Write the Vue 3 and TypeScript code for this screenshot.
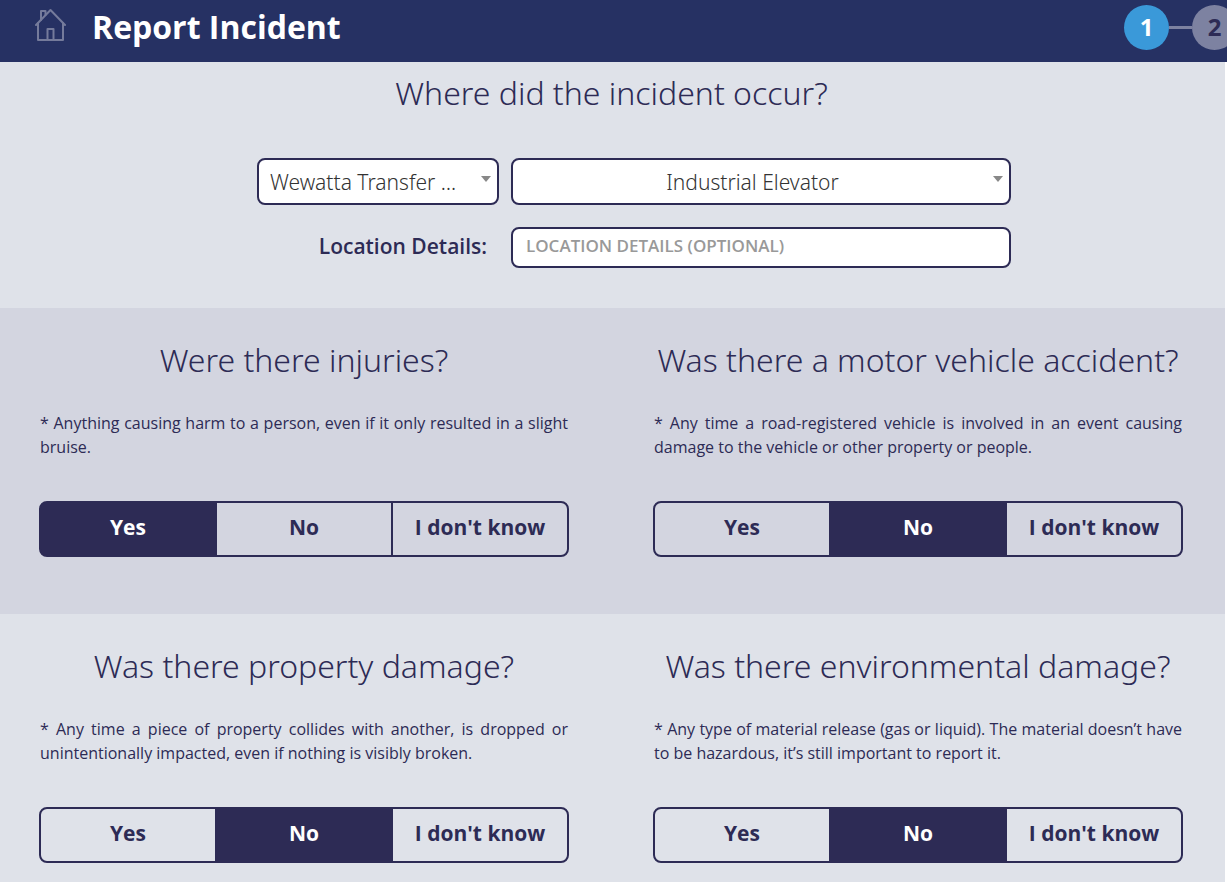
<script setup lang="ts">
import { ref } from 'vue'

interface Question {
  id: string
  title: string
  note: string
  answer: string
}

const answers: string[] = ['Yes', 'No', "I don't know"]

const site = ref('Wewatta Transfer Station')
const area = ref('Industrial Elevator')
const details = ref('')

const rows = ref<Question[][]>([
  [
    {
      id: 'injuries',
      title: 'Were there injuries?',
      note: '* Anything causing harm to a person, even if it only resulted in a slight bruise.',
      answer: 'Yes',
    },
    {
      id: 'vehicle',
      title: 'Was there a motor vehicle accident?',
      note: '* Any time a road-registered vehicle is involved in an event causing damage to the vehicle or other property or people.',
      answer: 'No',
    },
  ],
  [
    {
      id: 'property',
      title: 'Was there property damage?',
      note: '* Any time a piece of property collides with another, is dropped or unintentionally impacted, even if nothing is visibly broken.',
      answer: 'No',
    },
    {
      id: 'environment',
      title: 'Was there environmental damage?',
      note: '* Any type of material release (gas or liquid). The material doesn’t have to be hazardous, it’s still important to report it.',
      answer: 'No',
    },
  ],
])
</script>

<template>
  <div class="page">
    <header class="bar">
      <a class="home" href="#" aria-label="Home">
        <svg viewBox="0 0 32 34" width="32" height="34" fill="none" stroke="currentColor" stroke-width="2" stroke-linejoin="round" stroke-linecap="round">
          <path d="M1 17 15.500 2 30 17" />
          <path d="M3 15V32h25V15" />
          <path d="M6 12V3h4.500v4" />
          <path d="M12.500 32V21h6V32" />
        </svg>
      </a>
      <h1>Report Incident</h1>
      <ol class="steps">
        <li class="step current" aria-current="step">1</li>
        <li class="step">2</li>
      </ol>
    </header>

    <main>
      <section class="where">
        <h2>Where did the incident occur?</h2>
        <div class="fields">
          <div class="picker">
            <select v-model="site" class="box site" aria-label="Site">
              <option>Wewatta Transfer Station</option>
            </select>
          </div>
          <div class="picker">
            <select v-model="area" class="box area" aria-label="Area">
              <option>Industrial Elevator</option>
            </select>
          </div>
          <label for="details">Location Details:</label>
          <input id="details" v-model="details" class="box" type="text" placeholder="LOCATION DETAILS (OPTIONAL)" />
        </div>
      </section>

      <section v-for="(row, i) in rows" :key="i" class="questions" :class="{ shaded: i % 2 === 0 }">
        <article v-for="q in row" :key="q.id" class="question">
          <h2 :id="q.id">{{ q.title }}</h2>
          <p>{{ q.note }}</p>
          <div class="choices" role="group" :aria-labelledby="q.id">
            <button
              v-for="a in answers"
              :key="a"
              type="button"
              :class="{ selected: q.answer === a }"
              :aria-pressed="q.answer === a"
              @click="q.answer = a"
            >{{ a }}</button>
          </div>
        </article>
      </section>
    </main>
  </div>
</template>

<style>
body {
  margin: 0;
  background: #fff;
}
</style>

<style scoped>
.page {
  display: flex;
  flex-direction: column;
  min-height: 100vh;
  overflow: hidden;
  color: #2d2b55;
  font-family: "Open Sans", "Noto Sans", sans-serif;
}

.page *,
.page {
  box-sizing: border-box;
}

.bar {
  display: flex;
  align-items: center;
  height: 62px;
  padding: 0 0 8px 35px;
  overflow: hidden;
  background: #263163;
}

.home {
  display: flex;
  padding-bottom: 4px;
  color: #757b9b;
}

h1 {
  flex: 1;
  margin: 0 0 0 25px;
  color: #fff;
  font-size: 32px;
  font-weight: 700;
  line-height: 48px;
}

.steps {
  display: flex;
  gap: 23px;
  margin: 0 -10px 0 0;
  padding: 0;
  list-style: none;
}

.step {
  position: relative;
  width: 45px;
  height: 45px;
  border-radius: 50%;
  background: #7d82a1;
  color: #2d2b55;
  font-size: 24px;
  font-weight: 700;
  line-height: 44px;
  text-align: center;
}

.step.current {
  background: #3a99d9;
  color: #fff;
}

.step + .step::before {
  content: "";
  position: absolute;
  top: 21px;
  right: 100%;
  width: 23px;
  height: 3px;
  background: #7d82a1;
}

main {
  flex: 1;
  margin-right: 2px;
  background: #dfe2e9;
}

h2 {
  margin: 0;
  font-family: "Noto Sans", "Open Sans", sans-serif;
  font-size: 32px;
  font-weight: 300;
  line-height: 48px;
  text-align: center;
}

.where {
  padding: 7px 2px 40px 0;
}

.fields {
  display: grid;
  grid-template-columns: minmax(0, 242px) minmax(0, 500px);
  justify-content: center;
  align-items: center;
  gap: 22px 12px;
  margin-top: 41px;
  padding-left: 45px;
}

.picker {
  position: relative;
}

.picker::after {
  content: "";
  position: absolute;
  top: 18px;
  right: 8px;
  border: 5px solid transparent;
  border-top: 6px solid #888;
  border-bottom: 0;
  pointer-events: none;
}

.box {
  display: block;
  width: 100%;
  height: 41px;
  border: 2px solid #2d2b55;
  border-radius: 8px;
  background: #fff;
  color: #333;
  font-family: inherit;
}

select.box {
  appearance: none;
  height: 47px;
  padding: 0 28px 0 11px;
  font-family: "Noto Sans", "Open Sans", sans-serif;
  font-size: 21px;
  font-weight: 300;
  text-overflow: ellipsis;
}

select.site {
  padding-right: 32px;
}

.area {
  text-align: center;
  text-align-last: center;
}

input.box {
  padding: 0 13px 4px;
  font-size: 17px;
  font-weight: 600;
}

input.box::placeholder {
  color: #999;
  opacity: 1;
}

label {
  padding: 0 12px 4px 0;
  font-size: 21px;
  font-weight: 600;
  line-height: 32px;
  text-align: right;
}

.questions {
  display: grid;
  grid-template-columns: repeat(2, minmax(0, 1fr));
  gap: 84px;
  padding: 28px 42px 57px 39px;
}

.questions.shaded {
  background: #d3d5e0;
}

p {
  margin: 27px 0 42px;
  padding: 0 1px;
  font-size: 16px;
  font-weight: 400;
  line-height: 24px;
  text-align: justify;
}

.choices {
  display: grid;
  grid-template-columns: repeat(3, minmax(0, 1fr));
  padding-left: 2px;
}

button {
  height: 56px;
  margin-left: -2px;
  padding: 0 0 4px;
  border: 2px solid #2d2b55;
  background: transparent;
  color: #2d2b55;
  font-family: inherit;
  font-size: 21px;
  font-weight: 700;
}

button:first-child {
  border-radius: 8px 0 0 8px;
}

button:last-child {
  border-radius: 0 8px 8px 0;
}

button.selected {
  background: #2d2b55;
  color: #fff;
}
</style>
